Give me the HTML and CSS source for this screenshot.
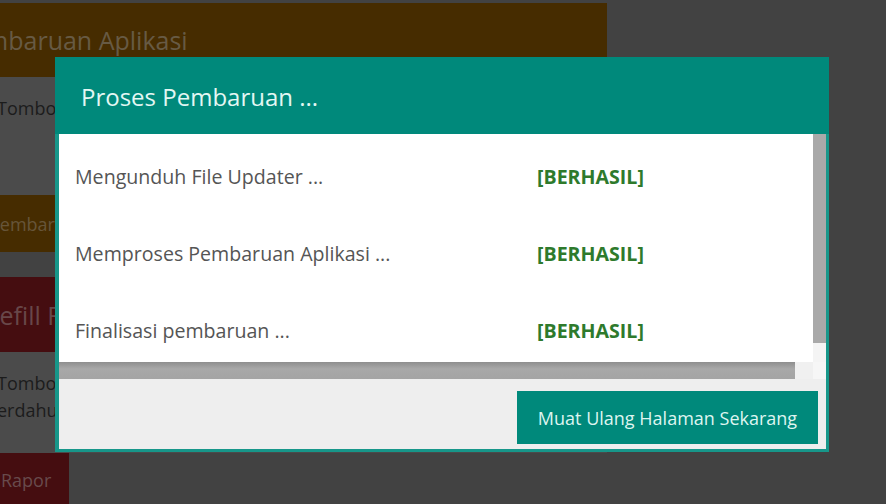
FILE: index.html
```html
<!DOCTYPE html>
<html lang="id">
<head>
<meta charset="utf-8">
<title>Proses Pembaruan</title>
<link rel="stylesheet" href="styles.css">
</head>
<body>
<div class="page">
  <section class="panel">
    <div class="panel-head head-brown"><span class="t1">Pembaruan Aplikasi</span></div>
    <div class="panel-body b1">Tombol di bawah ini digunakan untuk memperbarui aplikasi</div>
    <div class="panel-btn btn-brown"><span class="t3">Pembaruan Aplikasi</span></div>
  </section>
  <section class="panel panel-2">
    <div class="panel-head head-maroon"><span class="t4">Refill Rapor</span></div>
    <div class="panel-body b2">
      <div>Tombol di bawah ini digunakan untuk mengisi ulang rapor</div>
      <div>erdahulu yang belum lengkap</div>
    </div>
    <div class="panel-btn btn-maroon">Rapor</div>
  </section>
</div>

<div class="modal">
  <div class="modal-head">Proses Pembaruan ...</div>
  <div class="modal-body">
    <div class="scroll-area">
      <div class="row"><span class="label">Mengunduh File Updater ...</span><span class="status">[BERHASIL]</span></div>
      <div class="row"><span class="label">Memproses Pembaruan Aplikasi ...</span><span class="status">[BERHASIL]</span></div>
      <div class="row"><span class="label">Finalisasi pembaruan ...</span><span class="status">[BERHASIL]</span></div>
    </div>
    <div class="vbar"><div class="vthumb"></div></div>
    <div class="hbar"><div class="hthumb"></div></div>
    <div class="corner"></div>
  </div>
  <div class="modal-foot">
    <button class="btn-reload">Muat Ulang Halaman Sekarang</button>
  </div>
</div>
</body>
</html>
```
FILE: styles.css
```css
html, body {
  margin: 0;
  padding: 0;
}
body {
  background: #424242;
  font-family: "Open Sans", "Noto Sans", sans-serif;
  width: 886px;
  height: 504px;
  overflow: hidden;
  position: relative;
}
.page {
  margin-left: -50px;
  width: 657px;
  padding-top: 3px;
}
.panel-head {
  height: 74px;
  display: flex;
  align-items: center;
  font-size: 25px;
  white-space: nowrap;
  overflow: hidden;
}
.head-brown {
  background: #462c00;
  color: #675a44;
  padding-left: 6px;
}
.panel-body {
  background: #4b4b4b;
  color: #1c1c1c;
  font-size: 18px;
  line-height: 27px;
  white-space: nowrap;
  overflow: hidden;
}
.b1 {
  height: 118px;
  padding: 18px 0 0 47px;
  box-sizing: border-box;
}
.panel-btn {
  display: flex;
  align-items: center;
  font-size: 18px;
  white-space: nowrap;
  overflow: hidden;
}
.btn-brown {
  height: 57px;
  width: 200px;
  background: #462c00;
  color: #665539;
  padding-left: 39px;
  box-sizing: border-box;
}
.panel-2 {
  margin-top: 25px;
}
.head-maroon {
  height: 75px;
  background: #450d10;
  color: #684749;
  padding-left: 34px;
}
.b2 {
  height: 101px;
  padding: 18px 0 0 47px;
  box-sizing: border-box;
}
.btn-maroon {
  height: 60px;
  width: 119px;
  background: #450d10;
  color: #684a4c;
  padding-left: 51px;
  box-sizing: border-box;
  align-items: flex-start;
  padding-top: 15px;
}

/* modal */
.modal {
  position: absolute;
  left: 55px;
  top: 57px;
  width: 774px;
  background: #17978a;
  padding: 0 3px 3px 4px;
  box-sizing: border-box;
}
.modal-head {
  height: 77px;
  margin: 0 -3px 0 -4px;
  background: #00897b;
  color: #e3f7f3;
  font-size: 24px;
  display: flex;
  align-items: center;
  padding-left: 26px;
  padding-top: 2px;
  box-sizing: border-box;
}
.modal-body {
  display: grid;
  grid-template-columns: 1fr 13px;
  grid-template-rows: 228px 17px;
  background: #ffffff;
}
.scroll-area {
  overflow: hidden;
  padding: 4px 0 0 16px;
}
.row {
  height: 77px;
  display: grid;
  grid-template-columns: 462px auto;
  align-items: center;
  font-size: 19.6px;
  white-space: nowrap;
}
.label {
  color: #555555;
}
.status {
  color: #2e7a2c;
  font-weight: 700;
}
.vbar {
  background: #f4f4f4;
}
.vthumb {
  height: 209px;
  background: #a9a9a9;
}
.hbar {
  background: #f0f0f0;
  padding-right: 18px;
}
.hthumb {
  height: 17px;
  background: linear-gradient(#8e8e8e, #a8a8a8 40%, #a4a4a4);
}
.corner {
  background: #f6f6f6;
}
.modal-foot {
  background: #eeeeee;
  height: 70px;
  display: flex;
  justify-content: flex-end;
  align-items: flex-start;
  padding: 12px 8px 0 0;
  box-sizing: border-box;
}
.btn-reload {
  width: 301px;
  height: 53px;
  border: 0;
  background: #00897b;
  color: #def5f0;
  font-family: "Open Sans", "Noto Sans", sans-serif;
  font-size: 18px;
  padding: 0;
}
```
